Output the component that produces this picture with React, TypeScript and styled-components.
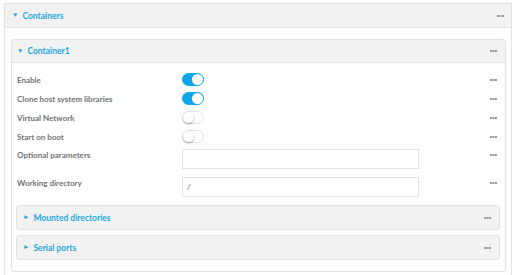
import React from "react";
import styled, { createGlobalStyle } from "styled-components";

const Global = createGlobalStyle`
  html, body { margin: 0; padding: 0; background: #ffffff; }
  body { font-family: Lato, "Open Sans", sans-serif; -webkit-font-smoothing: antialiased; }
  * { box-sizing: border-box; }
`;

const Page = styled.div`
  padding: 3px 4px 0 4px;
  width: 516px;
  height: 275px;
  overflow: hidden;
`;

const OuterPanel = styled.section`
  border: 1px solid #e2e2e2;
  border-bottom: none;
  box-shadow: 0 0 2px rgba(0, 0, 0, 0.06);
  height: 300px;
`;

const Header = styled.div<{ $h: number; $pl: number; $pr: number }>`
  display: flex;
  align-items: center;
  height: ${(p) => p.$h}px;
  padding: 0 ${(p) => p.$pr}px 0 ${(p) => p.$pl}px;
  background: #f2f2f2;
  border-bottom: 1px solid #e3e3e3;
`;

const Title = styled.span`
  flex: 1;
  display: flex;
  align-items: center;
  gap: 4px;
  color: #1ea7e1;
  font-weight: 700;
  font-size: 8.5px;
`;

const Caret = styled.span`
  font-size: 6.5px;
  line-height: 1;
`;

const OuterBody = styled.div`
  padding: 11px 5px 0 6px;
`;

const InnerPanel = styled.section`
  border: 1px solid #e0e0e0;
  border-radius: 3px;
  overflow: hidden;
`;

const InnerBody = styled.div`
  padding: 7px 5px 11px 4px;
  display: flex;
  flex-direction: column;
`;

const Row = styled.div<{ $h: number; $top?: boolean; $mt?: number }>`
  display: grid;
  grid-template-columns: 165px 1fr 10px;
  align-items: ${(p) => (p.$top ? "start" : "center")};
  height: ${(p) => p.$h}px;
  margin-top: ${(p) => p.$mt ?? 0}px;
  padding: 0 3px 0 1px;
`;

const Label = styled.span<{ $top?: boolean }>`
  color: #747474;
  font-weight: 700;
  font-size: 8px;
  padding-top: ${(p) => (p.$top ? 1 : 0)}px;
`;

const Switch = styled.span<{ $on: boolean }>`
  position: relative;
  display: block;
  width: 22px;
  height: 13px;
  border-radius: 7px;
  background: ${(p) => (p.$on ? "#0ea5ec" : "#ffffff")};
  border: 1px solid ${(p) => (p.$on ? "#0ea5ec" : "#e2e2e2")};
  &::after {
    content: "";
    position: absolute;
    top: 0px;
    left: ${(p) => (p.$on ? "9px" : "0px")};
    width: 11px;
    height: 11px;
    border-radius: 50%;
    background: #ffffff;
    box-shadow: ${(p) =>
      p.$on ? "none" : "0 1px 2px rgba(0,0,0,0.35)"};
  }
`;

const Input = styled.div`
  width: 237px;
  height: 20px;
  border: 1px solid #e2e2e2;
  display: flex;
  align-items: center;
  padding-left: 4px;
  color: #555;
  font-size: 8px;
`;

const Dots = styled.span<{ $top?: boolean }>`
  display: flex;
  justify-content: flex-end;
  align-self: ${(p) => (p.$top ? "start" : "center")};
  padding-top: ${(p) => (p.$top ? 5 : 0)}px;
`;

const SubPanel = styled.div<{ $mt: number }>`
  margin-top: ${(p) => p.$mt}px;
  height: 25px;
  border: 1px solid #e3e3e3;
  border-radius: 3px;
  background: #f2f2f2;
  display: flex;
  align-items: center;
  padding: 0 8px 0 6px;
`;

const Ellipsis = () => (
  <svg width="7" height="2" viewBox="0 0 7 2">
    <rect x="0" y="0" width="7" height="2" fill="#9a9a9a" />
    <rect x="2" y="0" width="0.6" height="2" fill="#dcdcdc" />
    <rect x="4.4" y="0" width="0.6" height="2" fill="#dcdcdc" />
  </svg>
);

const toggles: [string, boolean][] = [
  ["Enable", true],
  ["Clone host system libraries", true],
  ["Virtual Network", false],
  ["Start on boot", false],
];

export default function App() {
  return (
    <>
      <Global />
      <Page>
        <OuterPanel>
          <Header $h={24} $pl={7} $pr={7}>
            <Title>
              <Caret>▼</Caret>Containers
            </Title>
            <Ellipsis />
          </Header>
          <OuterBody>
            <InnerPanel>
              <Header $h={23} $pl={5} $pr={8}>
                <Title>
                  <Caret>▼</Caret>Container1
                </Title>
                <Ellipsis />
              </Header>
              <InnerBody>
                {toggles.map(([l, on]) => (
                  <Row key={l} $h={19}>
                    <Label>{l}</Label>
                    <Switch $on={on} />
                    <Dots>
                      <Ellipsis />
                    </Dots>
                  </Row>
                ))}
                <Row $h={20} $top $mt={3}>
                  <Label $top>Optional parameters</Label>
                  <Input />
                  <Dots $top>
                    <Ellipsis />
                  </Dots>
                </Row>
                <Row $h={20} $top $mt={8}>
                  <Label $top>Working directory</Label>
                  <Input>/</Input>
                  <Dots $top>
                    <Ellipsis />
                  </Dots>
                </Row>
                <SubPanel $mt={8}>
                  <Title>
                    <Caret>►</Caret>Mounted directories
                  </Title>
                  <Ellipsis />
                </SubPanel>
                <SubPanel $mt={5}>
                  <Title>
                    <Caret>►</Caret>Serial ports
                  </Title>
                  <Ellipsis />
                </SubPanel>
              </InnerBody>
            </InnerPanel>
          </OuterBody>
        </OuterPanel>
      </Page>
    </>
  );
}
